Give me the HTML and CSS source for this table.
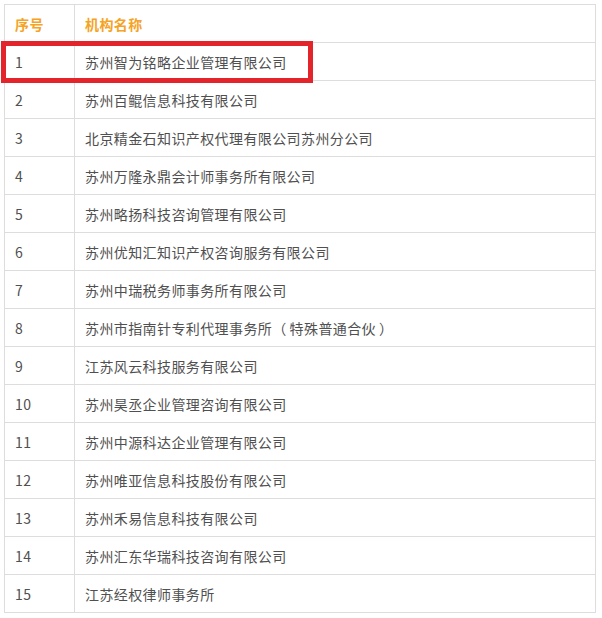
FILE: index.html
```html
<!DOCTYPE html>
<html lang="zh-CN">
<head>
<meta charset="utf-8">
<title>机构名称</title>
<link rel="stylesheet" href="styles.css">
</head>
<body>
<div class="wrap">
  <table class="org-table">
    <thead>
      <tr><th class="num">序号</th><th>机构名称</th></tr>
    </thead>
    <tbody>
      <tr><td class="num">1</td><td>苏州智为铭略企业管理有限公司</td></tr>
      <tr><td class="num">2</td><td>苏州百鲲信息科技有限公司</td></tr>
      <tr><td class="num">3</td><td>北京精金石知识产权代理有限公司苏州分公司</td></tr>
      <tr><td class="num">4</td><td>苏州万隆永鼎会计师事务所有限公司</td></tr>
      <tr><td class="num">5</td><td>苏州略扬科技咨询管理有限公司</td></tr>
      <tr><td class="num">6</td><td>苏州优知汇知识产权咨询服务有限公司</td></tr>
      <tr><td class="num">7</td><td>苏州中瑞税务师事务所有限公司</td></tr>
      <tr><td class="num">8</td><td>苏州市指南针专利代理事务所<span class="paren-open">（</span>特殊普通合伙<span class="paren-close">）</span></td></tr>
      <tr><td class="num">9</td><td>江苏风云科技服务有限公司</td></tr>
      <tr><td class="num">10</td><td>苏州昊丞企业管理咨询有限公司</td></tr>
      <tr><td class="num">11</td><td>苏州中源科达企业管理有限公司</td></tr>
      <tr><td class="num">12</td><td>苏州唯亚信息科技股份有限公司</td></tr>
      <tr><td class="num">13</td><td>苏州禾易信息科技有限公司</td></tr>
      <tr><td class="num">14</td><td>苏州汇东华瑞科技咨询有限公司</td></tr>
      <tr><td class="num">15</td><td>江苏经权律师事务所</td></tr>
    </tbody>
  </table>
  <div class="highlight"></div>
</div>
</body>
</html>
```

FILE: styles.css
```css
html, body {
  margin: 0;
  padding: 0;
  background: #ffffff;
}

body {
  padding: 4px 0 0 4px;
  font-family: "Noto Sans CJK SC", "Noto Sans", "Liberation Sans", sans-serif;
  color: #505050;
}

.wrap {
  position: relative;
  width: 592px;
}

.org-table {
  width: 592px;
  border-collapse: collapse;
  table-layout: fixed;
  font-size: 14px;
  letter-spacing: 0.4px;
}

.org-table th,
.org-table td {
  border: 1px solid #dddddd;
  height: 37px;
  padding: 0 10px;
  text-align: left;
  vertical-align: middle;
  box-sizing: border-box;
  line-height: 20px;
}

.org-table tr {
  height: 38px;
}

.org-table th {
  color: #f5a325;
  font-weight: bold;
}

.org-table .num {
  width: 70px;
}

.paren-open {
  margin-right: 3px;
}

.paren-close {
  margin-left: 3px;
}

.highlight {
  position: absolute;
  left: -3px;
  top: 37px;
  width: 312px;
  height: 42px;
  border: 5px solid #e3242b;
  box-sizing: border-box;
}
```
